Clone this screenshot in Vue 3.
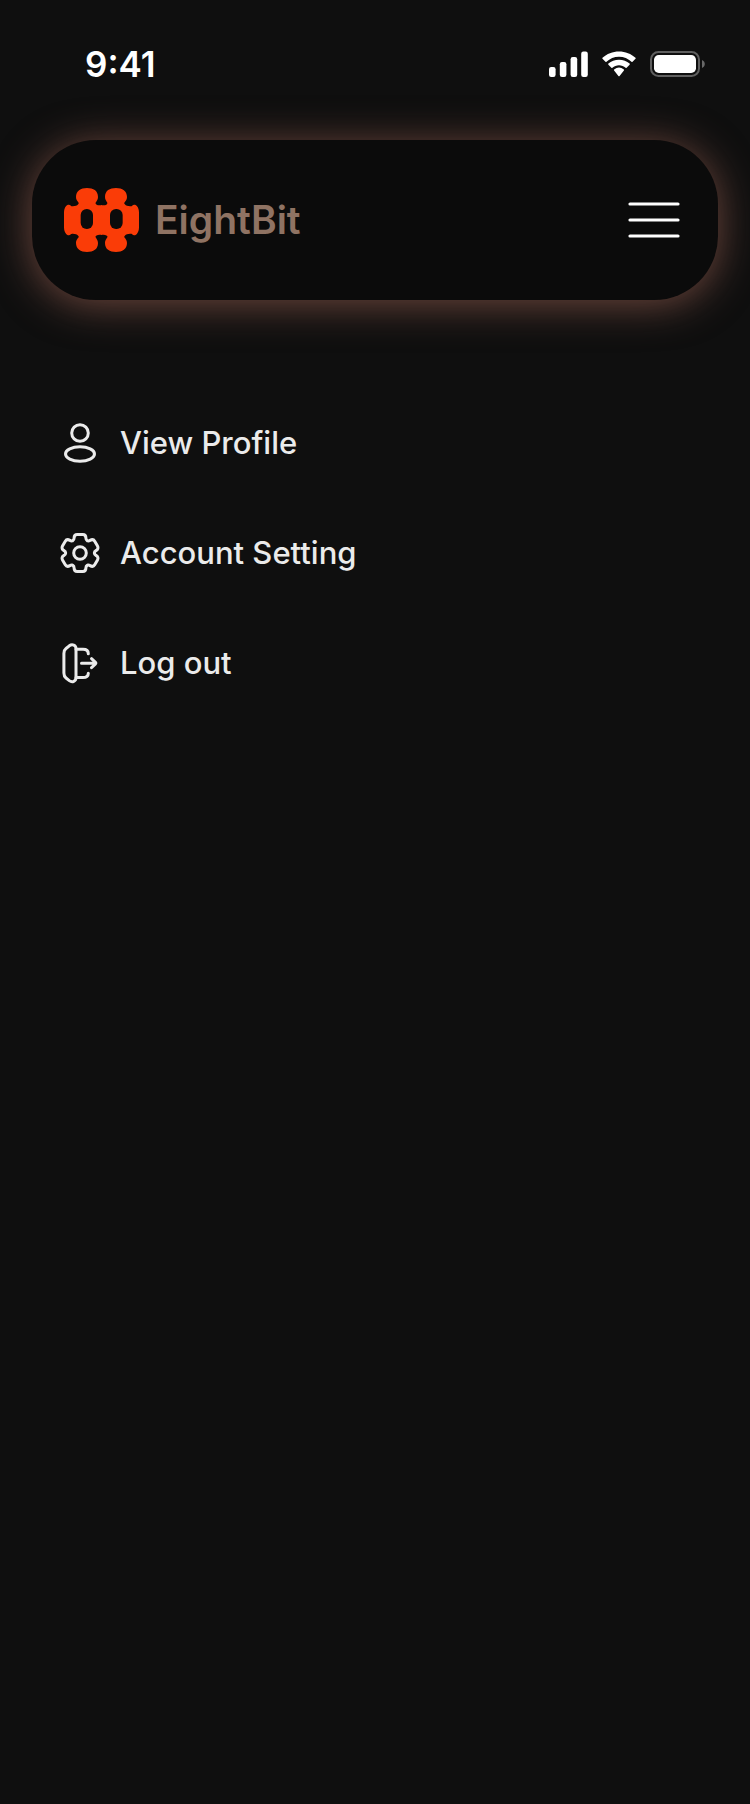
<script setup>
const lobe = [
  [-7.2, -12.4], [-6.2, -13], [-5.9, -14], [-5.9, -15],
  [-5.9, -17.5], [-4.6, -18.6], [-2.8, -18.6],
  [2.8, -18.6], [4.6, -18.6], [5.9, -17.5],
  [5.9, -15], [5.9, -14], [6.2, -13], [7.2, -12.4],
]

function turned(angle) {
  const c = Math.cos(angle)
  const s = Math.sin(angle)
  return lobe.map(([x, y]) => `${(24 + x * c - y * s).toFixed(2)} ${(24 + x * s + y * c).toFixed(2)}`)
}

const gear = Array.from({ length: 6 }, (_, i) => {
  const p = turned((i * Math.PI) / 3)
  return `${i ? 'L' : 'M'}${p[0]}C${p[1]} ${p[2]} ${p[3]}C${p[4]} ${p[5]} ${p[6]}L${p[7]}C${p[8]} ${p[9]} ${p[10]}C${p[11]} ${p[12]} ${p[13]}`
}).join('') + 'Z'

const items = [
  { id: 'profile', label: 'View Profile' },
  { id: 'settings', label: 'Account Setting' },
  { id: 'logout', label: 'Log out' },
]
</script>

<template>
  <div class="screen">
    <div class="status">
      <time class="clock">9:41</time>
      <div class="indicators">
        <svg width="39" height="26" viewBox="0 0 39 26" fill="#fff" aria-hidden="true">
          <rect x="0" y="16" width="6.6" height="10" rx="2.2" />
          <rect x="10.8" y="11" width="6.6" height="15" rx="2.2" />
          <rect x="21.6" y="6" width="6.6" height="20" rx="2.2" />
          <rect x="32.2" y="0.5" width="6.6" height="25.5" rx="2.2" />
        </svg>
        <svg width="36" height="26" viewBox="0 0 36 26" fill="#fff" aria-hidden="true">
          <path d="M18 5.8c4.8 0 9.2 1.9 12.5 5 .3.3.7.3 1 0l3-3a.8.8 0 0 0 0-1.1C30.2 2.7 24.3.4 18 .4S5.8 2.7 1.5 6.7a.8.8 0 0 0 0 1.1l3 3c.3.3.7.3 1 0 3.3-3.1 7.7-5 12.5-5z" />
          <path d="M18 14.2c2.5 0 4.8 1 6.6 2.5.3.3.7.3 1 0l3-3a.8.8 0 0 0 0-1.1C25.8 10.1 22.1 8.7 18 8.7s-7.8 1.4-10.6 3.9a.8.8 0 0 0 0 1.1l3 3c.3.3.7.3 1 0 1.8-1.5 4.1-2.5 6.6-2.5z" />
          <path d="M22.9 19.5c.3-.3.3-.8 0-1.1a7.8 7.8 0 0 0-9.8 0c-.3.3-.3.8 0 1.1l4.3 5.4c.3.4.9.4 1.2 0z" />
        </svg>
        <svg width="56" height="26" viewBox="0 0 56 26" aria-hidden="true">
          <rect x="1" y="1" width="48" height="24" rx="7.5" fill="none" stroke="#5f5f5f" stroke-width="2" />
          <rect x="4" y="4" width="42" height="18" rx="4.8" fill="#fff" />
          <path d="M52 9v8c1.7-.7 2.8-2.2 2.8-4S53.7 9.7 52 9z" fill="#686868" />
        </svg>
      </div>
    </div>

    <header class="bar">
      <a class="brand" href="#">
        <svg width="75" height="64" viewBox="0 0 225 192" aria-hidden="true">
          <defs>
            <path id="quarter" d="M114 97.5V52C104 52 97 51 96.5 48.5C90 44 102 40 102 27C102 8 88 0 69 0C50 0 36 9 36 27C36 40 48 44 43 48C40 55 22 56 20.5 53C18 49 10 49 6.5 54C2 59 0 66 0 74V97.5Z" />
          </defs>
          <g fill="#fa3c07">
            <use href="#quarter" />
            <use href="#quarter" transform="translate(225 0) scale(-1 1)" />
            <use href="#quarter" transform="translate(0 192) scale(1 -1)" />
            <use href="#quarter" transform="translate(225 192) scale(-1 -1)" />
          </g>
          <rect x="50" y="63" width="37" height="60" rx="18" fill="#0b0b0b" />
          <rect x="138" y="63" width="38" height="60" rx="18" fill="#0b0b0b" />
        </svg>
        <span>EightBit</span>
      </a>
      <button class="toggle" type="button" aria-label="Menu">
        <svg width="52" height="36" viewBox="0 0 52 36" stroke="#fff" stroke-width="3.2" stroke-linecap="round" aria-hidden="true">
          <path d="M2 2H50M2 18H50M2 34H50" />
        </svg>
      </button>
    </header>

    <nav class="menu">
      <a v-for="item in items" :key="item.id" class="item" href="#">
        <svg width="48" height="48" viewBox="0 0 48 48" fill="none" stroke="#ebebeb" stroke-width="3" stroke-linecap="round" stroke-linejoin="round" aria-hidden="true">
          <template v-if="item.id === 'profile'">
            <circle cx="24" cy="14" r="8.3" />
            <ellipse cx="24" cy="35" rx="14.5" ry="7.2" />
          </template>
          <template v-else-if="item.id === 'settings'">
            <path :d="gear" />
            <circle cx="24" cy="24" r="6.3" />
          </template>
          <template v-else>
            <path d="M7.9 14.5C7.9 12 8.3 10.8 10 9.5L13.3 6.8C16.3 4.6 20 6.2 20 9.7V38.5C20 42.3 16.3 43.8 13.3 41.6L10 39C8.3 37.7 7.9 36.5 7.9 34Z" />
            <path d="M20 10.3H27C30.500 10.300 32.300 11.500 32.300 14.700M20 38.500H27C30.500 38.500 32.300 37.200 32.300 34.200" />
            <path d="M25.500 24.200H39M35.500 19.700L39.500 23.400Q40.300 24.200 39.500 25L35.500 28.700" />
          </template>
        </svg>
        <span>{{ item.label }}</span>
      </a>
    </nav>
  </div>
</template>

<style>
body {
  background: #0f0f0f;
}
</style>

<style scoped>
.screen {
  min-height: 100vh;
  box-sizing: border-box;
  padding: 44px 32px;
  background: #0f0f0f;
  font-family: Inter, "Liberation Sans", sans-serif;
}

.status {
  display: flex;
  align-items: center;
  justify-content: space-between;
  height: 40px;
  padding: 0 12px 0 53px;
}

.clock {
  color: #fff;
  font-size: 35px;
  font-weight: 600;
  line-height: 40px;
}

.indicators {
  display: flex;
  gap: 13px;
}

.bar {
  display: flex;
  align-items: center;
  justify-content: space-between;
  box-sizing: border-box;
  height: 160px;
  margin-top: 56px;
  padding: 0 38px 0 32px;
  border-radius: 64px;
  background: #0b0b0b;
  box-shadow: 0 4px 40px #70483e;
}

.brand {
  display: flex;
  align-items: center;
  gap: 16px;
  color: #8f7363;
  font-size: 39px;
  font-weight: 600;
  line-height: 48px;
  text-decoration: none;
}

.toggle {
  display: flex;
  padding: 0;
  border: 0;
  background: none;
  cursor: pointer;
}

svg {
  display: block;
  flex: none;
}

.menu {
  display: flex;
  flex-direction: column;
  align-items: flex-start;
  gap: 62px;
  margin-top: 119px;
  padding: 0 24px;
}

.item {
  display: flex;
  align-items: center;
  gap: 16px;
  color: #ebebeb;
  font-size: 31px;
  font-weight: 500;
  line-height: 48px;
  text-decoration: none;
}
</style>
